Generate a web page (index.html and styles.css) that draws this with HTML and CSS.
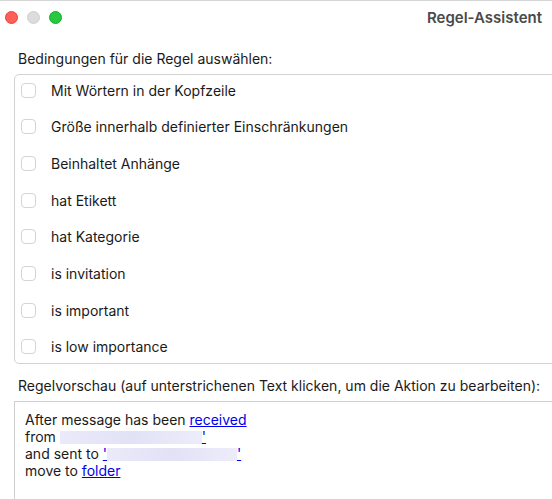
FILE: index.html
```html
<!DOCTYPE html>
<html lang="de">
<head>
    <meta charset="UTF-8">
    <title>Regel-Assistent</title>
    <link rel="stylesheet" href="styles.css">
</head>
<body>
    <div class="window">
        <div class="titlebar">
            <span class="light red"></span>
            <span class="light gray"></span>
            <span class="light green"></span>
            <span class="title">Regel-Assistent</span>
        </div>

        <div class="section-label first">Bedingungen für die Regel auswählen:</div>
        <div class="conditions">
            <label class="row"><span class="check"></span>Mit Wörtern in der Kopfzeile</label>
            <label class="row"><span class="check"></span>Größe innerhalb definierter Einschränkungen</label>
            <label class="row"><span class="check"></span>Beinhaltet Anhänge</label>
            <label class="row"><span class="check"></span>hat Etikett</label>
            <label class="row"><span class="check"></span>hat Kategorie</label>
            <label class="row"><span class="check"></span>is invitation</label>
            <label class="row"><span class="check"></span>is important</label>
            <label class="row"><span class="check"></span>is low importance</label>
        </div>

        <div class="section-label">Regelvorschau (auf unterstrichenen Text klicken, um die Aktion zu bearbeiten):</div>
        <div class="preview">
            <div>After message has been <a href="#">received</a></div>
            <div>from <a href="#"><span class="blur w1"></span>'</a></div>
            <div>and sent to <a href="#">'<span class="blur w2"></span>'</a></div>
            <div>move to <a href="#">folder</a></div>
        </div>
    </div>
</body>
</html>
```

FILE: styles.css
```css
body {
    margin: 0;
    background: #ffffff;
    font-family: Inter, "Liberation Sans", Arial, sans-serif;
    font-size: 14px;
    color: #1a1a1a;
    overflow: hidden;
}
.window {
    width: 552px;
    height: 499px;
    border-top: 1px solid #d6d6d6;
    box-sizing: border-box;
    overflow: hidden;
}
.titlebar {
    height: 33px;
    display: flex;
    align-items: center;
    padding-left: 5px;
    gap: 9px;
}
.light {
    width: 13px;
    height: 13px;
    border-radius: 50%;
    box-sizing: border-box;
}
.red { background: #fe5f57; border: 1px solid #e2463f; }
.gray { background: #dcdcdc; border: 1px solid #cfcfcf; }
.green { background: #28c840; border: 1px solid #1aab29; }
.title {
    margin-left: auto;
    padding-right: 10px;
    font-size: 15px;
    font-weight: 600;
    color: #4a4a4a;
}
.section-label {
    padding-left: 18px;
    margin: 13px 0 7px;
}
.section-label.first {
    margin-top: 16px;
}
.conditions {
    margin-left: 14px;
    margin-right: -10px;
    border: 1px solid #d3d3d3;
    border-radius: 5px;
    padding: 4px 0 5px;
    display: flex;
    flex-direction: column;
    gap: 14.7px;
}
.row {
    height: 22px;
    display: flex;
    align-items: center;
    padding-left: 6px;
}
.check {
    width: 15px;
    height: 15px;
    border: 1px solid #d4d4d4;
    border-radius: 4px;
    box-sizing: border-box;
    margin-right: 15px;
    background: #fff;
}
.preview {
    margin-left: 14px;
    margin-right: -10px;
    border: 1px solid #cfcfcf;
    border-bottom: none;
    height: 100px;
    padding: 9px 10px 0;
    line-height: 17px;
}
.preview a {
    color: #0000ee;
}
.blur {
    display: inline-block;
    height: 13px;
    vertical-align: -2px;
    background: linear-gradient(90deg, #eaeafa, #e2e2f6 50%, #ececfb);
}
.w1 { width: 142px; }
.w2 { width: 130px; }
```
